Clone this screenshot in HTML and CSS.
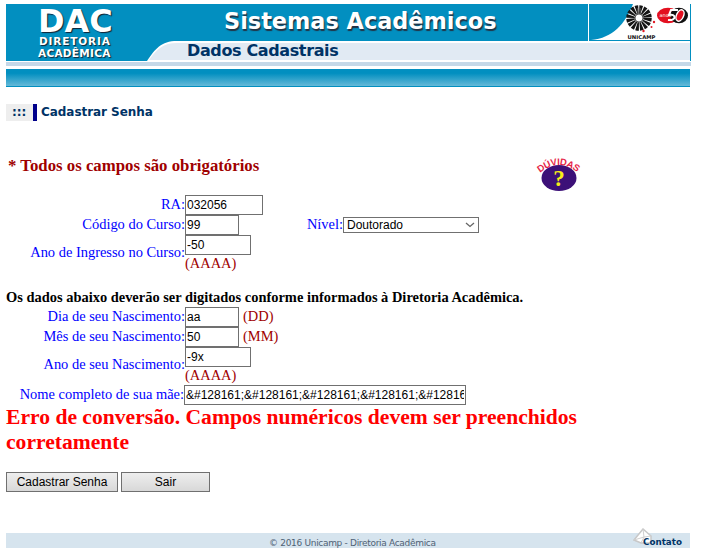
FILE: index.html
```html
<!DOCTYPE html>
<html lang="pt-BR">
<head>
<meta charset="utf-8">
<title>DAC - Cadastrar Senha</title>
<link rel="stylesheet" href="styles.css">
</head>
<body>
<header class="banner">
  <div class="logo"><span class="dac">DAC</span><span class="dir">DIRETORIA</span><span class="aca">ACADÊMICA</span></div>
  <div class="titles">
    <div class="top">
      <h1>Sistemas Acadêmicos</h1>
      <svg class="marks" viewBox="0 0 103 37" width="103" height="37">
        <rect width="103" height="37" fill="#028fc0"/>
        <path d="M0 0V37" stroke="#fff" stroke-width="2"/>
        <path d="M45 0H102V36H3C25 34 37 20 45 0Z" fill="#fff"/>
        <circle cx="51" cy="14" r="8.500" fill="none" stroke="#151515" stroke-width="8.500" stroke-dasharray="2.500 .838"/>
        <path d="M49.500 4V10M52.500 4V10" stroke="#555" stroke-width=".7"/>
        <circle cx="51" cy="14" r="4" fill="#fff" stroke="#333" stroke-width=".8"/>
        <g fill="#e21b25"><circle cx="66" cy="18" r="1.200"/><circle cx="55.500" cy="27" r="1.200"/><circle cx="63.500" cy="23" r="1"/></g>
        <text x="39.500" y="35" class="uni" textLength="28" lengthAdjust="spacingAndGlyphs">UNICAMP</text>
        <ellipse cx="80" cy="11.500" rx="11" ry="7.800" fill="#e31020"/>
        <ellipse cx="91" cy="11.500" rx="9" ry="7.800" fill="#111"/>
        <text x="71.500" y="13" class="anos">anos</text>
        <path d="M90 6H83L81 11C88 9 89 17 80 16" fill="none" stroke="#fff" stroke-width="2"/>
        <ellipse cx="92" cy="11.500" rx="3.500" ry="6" transform="rotate(25 92 11.500)" fill="#e31020" stroke="#fff" stroke-width="1.500"/>
      </svg>
    </div>
    <div class="sub">
      <svg class="curve" viewBox="0 0 46 20" width="46" height="20"><rect width="46" height="20" fill="#028fc0"/><path d="M6 20C14 8 20 0 36 0H46V20Z" fill="#fff"/><path d="M8 19C16 8 22 2 36 2H46V19Z" fill="#e1eaf3"/></svg>
      <h2>Dados Cadastrais</h2>
    </div>
  </div>
</header>
<div class="rule"></div>
<div class="bar"></div>
<div class="crumb"><span class="dots">:::</span><strong>Cadastrar Senha</strong></div>
<div class="notice">
  <strong>* Todos os campos são obrigatórios</strong>
  <svg class="help" viewBox="0 0 50 40" width="50" height="40">
    <defs><path id="arc" d="M7 20Q26 4 45 20"/></defs>
    <ellipse cx="26" cy="25" rx="17.500" ry="13" fill="#3c1078"/>
    <text class="duv"><textPath href="#arc" textLength="41">DÚVIDAS</textPath></text>
    <text x="26" y="33" class="q" text-anchor="middle">?</text>
  </svg>
</div>
<form>
  <div class="row"><label>RA:</label><input class="w78" value="032056"></div>
  <div class="row"><label>Código do Curso:</label><input class="w54" value="99"><span class="level">Nível:</span><span class="select">Doutorado<svg width="10" height="6" viewBox="0 0 10 6"><path d="M1 1L5 4.500L9 1" fill="none" stroke="#666" stroke-width="1.300"/></svg></span></div>
  <div class="row tall"><label>Ano de Ingresso no Curso:</label><div><input class="w66" value="-50"><span class="hint">(AAAA)</span></div></div>
  <p class="info">Os dados abaixo deverão ser digitados conforme informados à Diretoria Acadêmica.</p>
  <div class="row"><label>Dia de seu Nascimento:</label><input class="w54" value="aa"><span class="hint side">(DD)</span></div>
  <div class="row"><label>Mês de seu Nascimento:</label><input class="w54" value="50"><span class="hint side">(MM)</span></div>
  <div class="row tall"><label>Ano de seu Nascimento:</label><div><input class="w66" value="-9x"><span class="hint">(AAAA)</span></div></div>
  <div class="row mother"><label>Nome completo de sua mãe:</label><input class="w282" value="&amp;#128161;&amp;#128161;&amp;#128161;&amp;#128161;&amp;#128161;"></div>
  <p class="error">Erro de conversão. Campos numéricos devem ser preenchidos corretamente</p>
  <div class="actions"><button class="save" type="button">Cadastrar Senha</button><button class="exit" type="button">Sair</button></div>
</form>
<footer>
  <span>© 2016 Unicamp - Diretoria Acadêmica</span>
  <svg class="contact" viewBox="0 0 54 20" width="54" height="20">
    <path d="M1 12L10 1L18 8V15H8Z" fill="#fff" stroke="#c8c8c8" stroke-width="1.500"/><path d="M1 12L11 9L18 8M10 1L11 9L8 15" fill="none" stroke="#d0d0d0"/>
    <text x="10" y="17" class="ctext" textLength="39" lengthAdjust="spacingAndGlyphs">Contato</text>
  </svg>
</footer>
</body>
</html>
```
FILE: styles.css
```css
* { box-sizing: border-box; }
body { margin: 0; padding: 4px 0 0 6px; width: 704px; height: 554px; overflow: hidden; background: #fff; font-family: "Liberation Serif", serif; font-size: 14.450px; }
h1, h2, p { margin: 0; }
.banner { display: flex; width: 685px; height: 57px; background: #028fc0; color: #fff; font-family: "DejaVu Sans", sans-serif; font-weight: bold; }
.logo { width: 135px; padding: 3px 0 0 32px; display: flex; flex-direction: column; text-shadow: 1px 1px 1px #123; white-space: nowrap; }
.dac { font-size: 32px; line-height: 29px; letter-spacing: -.1px; }
.dir { font-size: 10.500px; line-height: 11px; letter-spacing: .85px; padding-left: 1px; }
.aca { font-size: 10.500px; line-height: 12px; letter-spacing: .3px; }
.titles { width: 550px; }
.top { display: flex; height: 37px; }
h1 { width: 447px; padding-left: 83px; font-size: 22.400px; line-height: 34px; white-space: nowrap; text-shadow: 1px 2px 1px #234; }
.marks { display: block; }
.uni { font: bold 5px "DejaVu Sans", sans-serif; fill: #111; }
.anos { font: 5px "DejaVu Sans", sans-serif; fill: #fff; }
.sub { display: flex; height: 20px; border-right: 1px solid #028fc0; background: #e1eaf3; }
.curve { display: block; }
h2 { flex: 1; border-top: 2px solid #fff; border-bottom: 1px solid #fff; font-size: 16px; line-height: 16px; letter-spacing: -.37px; color: #003366; white-space: nowrap; }
.rule { width: 685px; height: 5px; border-top: 1px solid #fff; background: #c4d8e8; }
.bar { width: 684px; height: 18px; margin-top: 3px; background: linear-gradient(#028fc0 25%, #65b9d8); border-bottom: 1px solid #028fc0; }
.crumb { display: flex; height: 17px; margin-top: 17px; font: bold 12px/17px "DejaVu Sans", sans-serif; letter-spacing: -.05px; color: #003366; }
.dots { width: 31px; margin-right: 4px; padding-left: 6px; background: #eee; border-right: 4px solid #00008b; }
.notice { display: flex; height: 39px; margin-top: 35px; padding-left: 2px; font-size: 16.800px; line-height: 20px; color: #a00000; }
.notice strong { width: 525px; }
.help { display: block; margin-top: -3px; }
.duv { font: bold 9.500px "Liberation Sans", sans-serif; fill: #e61f47; }
.q { font: bold 23px "Liberation Serif", serif; fill: #f7ed18; }
.row { display: flex; align-items: center; height: 20px; line-height: 18px; }
.tall { height: 37px; }
label { width: 179px; padding-bottom: 2px; text-align: right; color: #0000ff; white-space: nowrap; }
.tall label { padding-bottom: 3px; }
input { display: block; height: 20px; padding: 1px; border: 1px solid #707070; outline: 0; font: 12px "Liberation Sans", sans-serif; color: #000; background: #fff; border-radius: 0; }
.w78 { width: 78px; }
.w54 { width: 54px; }
.w66 { width: 66px; }
.w282 { width: 282px; }
.hint { display: block; color: #a00000; line-height: 17px; }
.side { margin-left: 4px; padding-bottom: 2px; line-height: 18px; }
.level { width: 104px; padding-bottom: 2px; text-align: right; color: #0000ff; }
.select { display: flex; align-items: center; justify-content: space-between; width: 136px; height: 16px; margin-top: -1px; padding: 0 3px; border: 1px solid #707070; font: 12px "Liberation Sans", sans-serif; color: #000; }
.info { height: 35px; padding-top: 17px; font-weight: bold; line-height: 17px; white-space: nowrap; }
.mother { margin-top: 1px; }
.mother label { width: 178px; }
.error { width: 590px; height: 50px; font-size: 21.600px; line-height: 25px; font-weight: bold; color: #f00; }
.actions { display: flex; gap: 3px; margin-top: 17px; }
button { height: 20px; padding: 0; border: 1px solid #707070; border-radius: 0; background: linear-gradient(#eee, #d8d8d8); font: 12px "Liberation Sans", sans-serif; color: #000; }
.save { width: 112px; }
.exit { width: 89px; }
footer { display: flex; width: 684px; height: 15px; margin-top: 41px; background: #d6e4ee; font: 9px/20px "DejaVu Sans", sans-serif; letter-spacing: -.31px; color: #4f6275; }
footer span { width: 627px; padding-left: 263px; white-space: nowrap; }
.contact { display: block; margin-top: -5px; }
.ctext { font: bold 9.500px "DejaVu Sans", sans-serif; letter-spacing: 0; fill: #003366; }
```
